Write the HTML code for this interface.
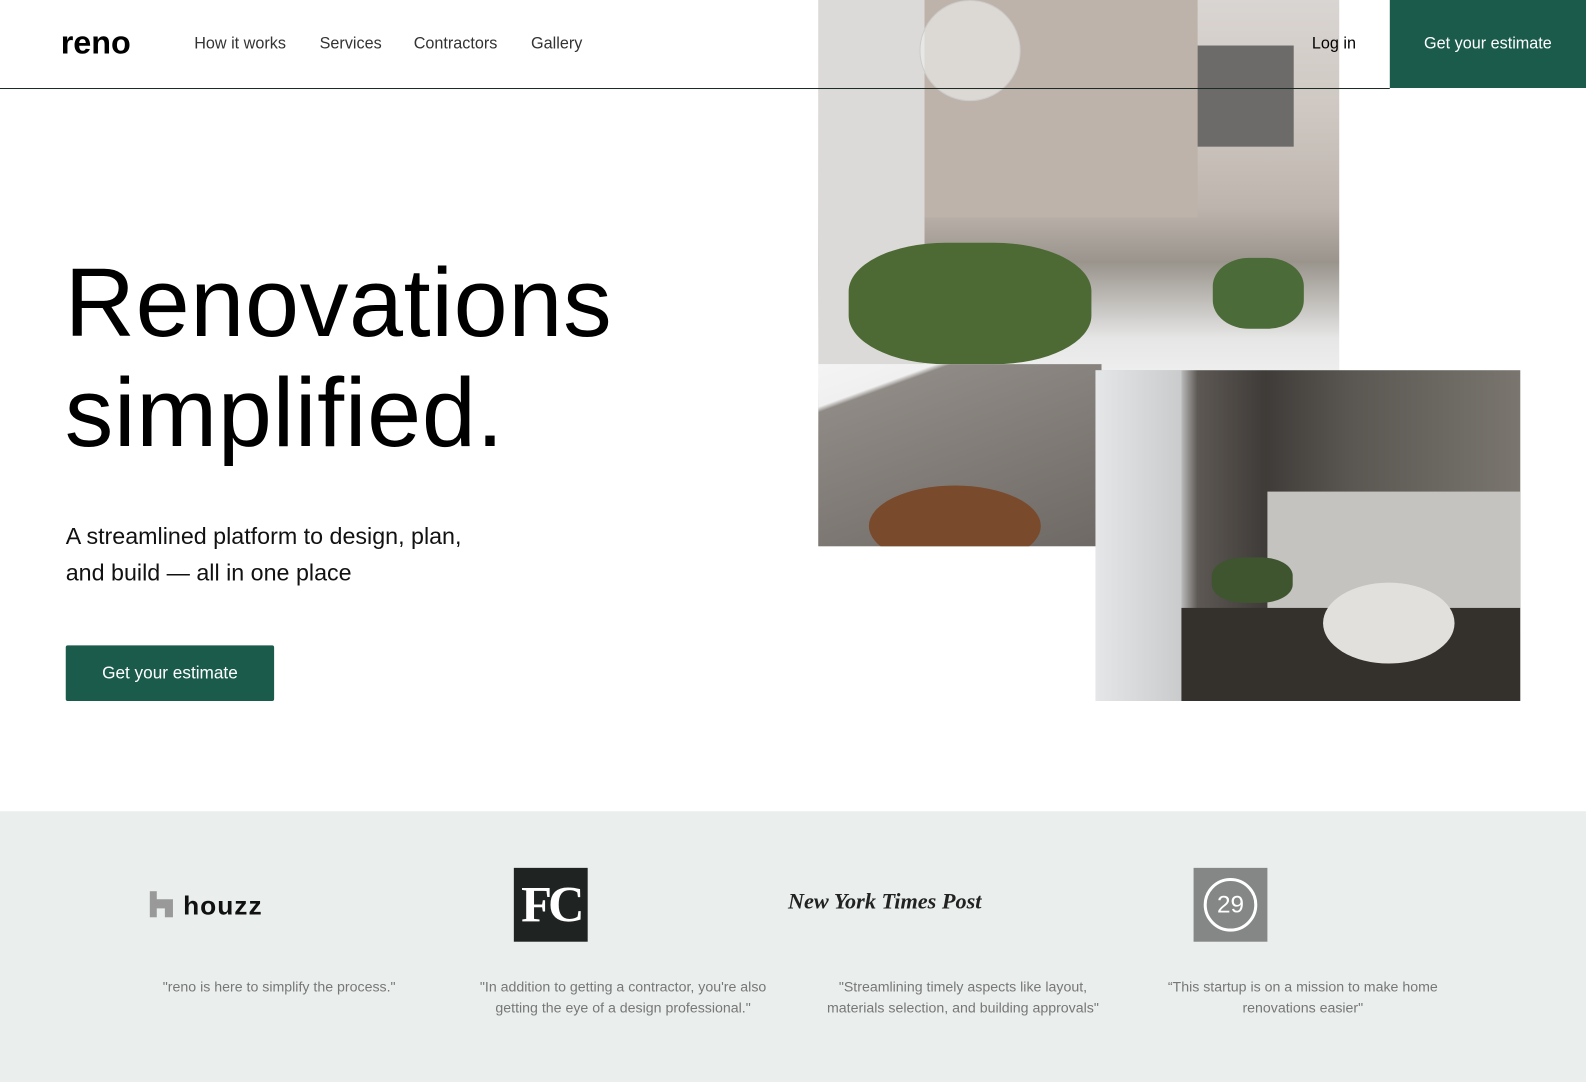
<!DOCTYPE html>
<html><head><meta charset="utf-8"><style>
*{margin:0;padding:0;box-sizing:border-box}
html,body{width:1586px;height:1082px;overflow:hidden;background:#fff}
body{font-family:"Liberation Sans",Arial,sans-serif;position:relative;color:#000}
#w{position:absolute;left:0;top:0;width:1568px;height:1082px;transform:scale(1.0115);transform-origin:0 0}
.abs{position:absolute}
.nav a{position:absolute;top:35px;font-size:16px;color:#333;text-decoration:none}
.kitchen{left:809px;top:0;width:515px;height:540px;overflow:hidden;
background:linear-gradient(180deg,#d9d5d2 0%,#cfc8c2 20%,#bdb4ad 38%,#9a948c 48%,#e6e6e6 62%,#f1f1f1 70%,#8a8580 80%,#6a625a 100%)}
.bath{left:1083px;top:366px;width:420px;height:327px;overflow:hidden;background:linear-gradient(90deg,#d9d9d9 0%,#bfc0c0 20%,#5d5854 24%,#3f3b38 40%,#5a5752 60%,#7a766f 100%)}
.q{position:absolute;top:965px;font-size:14px;line-height:21px;color:#777;text-align:center}
</style></head><body><div id="w">
<div class="abs kitchen">
 <div class="abs" style="left:105px;top:0;width:270px;height:215px;background:#bdb3aa"></div>
 <div class="abs" style="left:375px;top:45px;width:95px;height:100px;background:#6d6b69"></div>
 <div class="abs" style="left:0;top:0;width:105px;height:360px;background:#dcdad8"></div>
 <div class="abs" style="left:100px;top:0;width:100px;height:100px;border-radius:50%;background:rgba(240,240,240,.6);border:1px solid #ccc"></div>
 <div class="abs" style="left:30px;top:240px;width:240px;height:120px;border-radius:40%;background:#4d6a34"></div>
 <div class="abs" style="left:390px;top:255px;width:90px;height:70px;border-radius:40%;background:#4b6b38"></div>
 <div class="abs" style="left:0;top:360px;width:280px;height:180px;background:linear-gradient(160deg,#f4f4f4 0%,#f0f0f0 15%,#8f8a85 17%,#6e6964 100%)"></div>
 <div class="abs" style="left:50px;top:480px;width:170px;height:80px;border-radius:50%;background:#7a4a2c"></div>
</div>
<div class="abs bath">
 <div class="abs" style="left:0;top:0;width:85px;height:327px;background:linear-gradient(90deg,#e4e6e8,#c9cbcc)"></div>
 <div class="abs" style="left:170px;top:120px;width:250px;height:140px;background:#c5c3bf"></div>
 <div class="abs" style="left:85px;top:235px;width:335px;height:92px;background:#34302c"></div>
 <div class="abs" style="left:225px;top:210px;width:130px;height:80px;border-radius:50%;background:#e2e0dc"></div>
 <div class="abs" style="left:115px;top:185px;width:80px;height:45px;border-radius:40%;background:#3f5530"></div>
</div>
<div class="abs" style="left:0;top:87px;width:1374px;height:1px;background:#1e2a26"></div>
<div class="abs" style="left:60px;top:24px;font-size:32px;font-weight:bold">reno</div>
<div class="nav"><a style="left:192px">How it works</a><a style="left:316px">Services</a><a style="left:409px">Contractors</a><a style="left:525px">Gallery</a></div>
<div class="abs" style="left:1297px;top:35px;font-size:16px">Log in</div>
<div class="abs" style="left:1374px;top:0;width:194px;height:87px;background:#1a5b4b;color:#fff;font-size:16px;text-align:center;line-height:87px">Get your estimate</div>
<div class="abs" style="left:1566px;top:0;width:30px;height:87px;background:#1a5b4b"></div>
<div class="abs" style="left:64px;top:245px;font-size:96px;line-height:109px;letter-spacing:0.7px">Renovations<br>simplified.</div>
<div class="abs" style="left:65px;top:512px;font-size:23px;line-height:36px;color:#111">A streamlined platform to design, plan,<br>and build — all in one place</div>
<div class="abs" style="left:65px;top:638px;width:206px;height:55px;background:#1a5b4b;color:#fff;font-size:17px;line-height:55px;text-align:center;border-radius:2px">Get your estimate</div>
<div class="abs" style="left:0;top:802px;width:1568px;height:280px;background:#eaeeed"></div>
<svg class="abs" style="left:148px;top:881px" width="24" height="26"><path d="M0 0h7v8h16v18h-8v-9h-8v9H0z" fill="#999"/></svg>
<div class="abs" style="left:181px;top:880px;font-size:26px;font-weight:bold;color:#111;letter-spacing:1px">houzz</div>
<div class="abs" style="left:508px;top:858px;width:73px;height:73px;background:#1f2321;color:#fff;font-family:'Liberation Serif',serif;font-weight:bold;font-size:50px;line-height:73px;text-align:center;letter-spacing:-4px">FC</div>
<div class="abs" style="left:779px;top:878px;font-family:'Liberation Serif',serif;font-weight:bold;font-size:22px;color:#222;font-style:italic">New York Times Post</div>
<div class="abs" style="left:1180px;top:858px;width:73px;height:73px;background:#848786"><div class="abs" style="left:10px;top:10px;width:53px;height:53px;border:3px solid #fff;border-radius:50%;color:#fff;font-size:24px;text-align:center;line-height:47px">29</div></div>
<div class="q" style="left:126px;width:300px">"reno is here to simplify the process."</div>
<div class="q" style="left:466px;width:300px">"In addition to getting a contractor, you're also getting the eye of a design professional."</div>
<div class="q" style="left:802px;width:300px">"Streamlining timely aspects like layout, materials selection, and building approvals"</div>
<div class="q" style="left:1138px;width:300px">“This startup is on a mission to make home renovations easier"</div>
</div></body></html>
